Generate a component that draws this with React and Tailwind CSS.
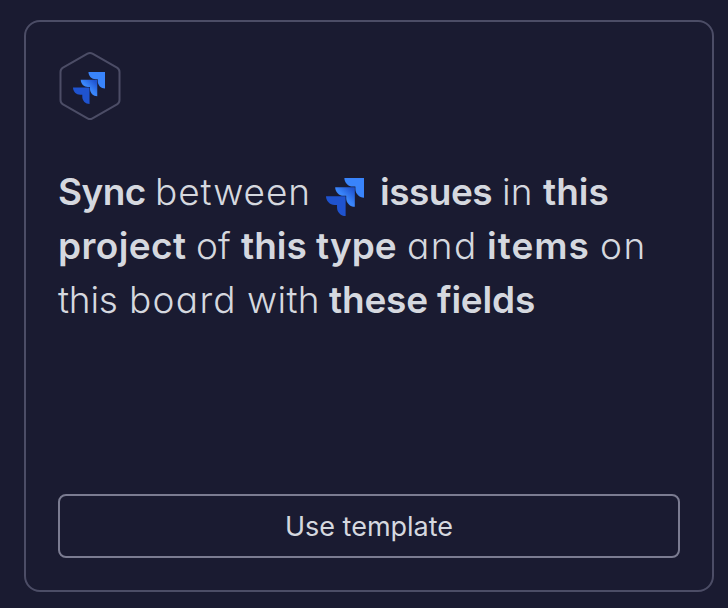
import { useId } from "react";

const ARROW = "M0 0H31V31C23.5 31 17.4 25 17.4 17.4V13.6H13.6C6 13.6 0 7.5 0 0Z";

function JiraMark({ className }) {
  const id = useId();
  return (
    <svg className={className} viewBox="0 0 60 60" fill="none">
      <defs>
        <linearGradient id={id + "m"} x1="30" y1="1" x2="16" y2="16" gradientUnits="userSpaceOnUse">
          <stop offset="0.15" stopColor="#1f53cf" />
          <stop offset="1" stopColor="#3a86fb" />
        </linearGradient>
      </defs>
      <path d={ARROW} transform="translate(29 0)" fill="#3984fb" />
      <path d={ARROW} transform="translate(14.5 14.5)" fill={`url(#${id}m)`} />
      <path d={ARROW} transform="translate(0 29)" fill="#1f53cf" />
    </svg>
  );
}

export default function App() {
  return (
    <main className="h-[608px] w-[728px] bg-[#1a1b31] pt-5 pl-6 text-[#d5d8df]">
      <section className="flex h-[572px] w-[690px] flex-col rounded-2xl border-2 border-[#4c4d66] px-8 pt-[29px] pb-8">
        <div className="grid h-[70px] w-16 place-items-center">
          <svg className="col-start-1 row-start-1 h-[70px] w-16" viewBox="0 0 64 70" fill="none">
            <path
              d="M29.5 2.7Q32 1.3 34.5 2.7L59 16.7Q61.5 18.1 61.5 21V49Q61.5 51.9 59 53.3L34.5 67.3Q32 68.7 29.5 67.3L5 53.3Q2.5 51.9 2.5 49V21Q2.5 18.1 5 16.7Z"
              stroke="#4c4d66"
              strokeWidth="2"
            />
          </svg>
          <JiraMark className="col-start-1 row-start-1 mt-[3px] -ml-0.5 size-8" />
        </div>
        <h2 className="mt-11 font-['Inter',sans-serif] text-[37px] leading-[54px] font-light whitespace-nowrap [font-feature-settings:'cv11']">
          <div className="flex h-[54px]">
            <b className="w-[97px] font-semibold tracking-[-0.6px]">Sync</b>
            <span className="w-[171px] tracking-[0.9px]">between</span>
            <JiraMark className="mt-[13px] mr-[16px] size-[38px]" />
            <b className="w-[122px] font-semibold tracking-[-0.5px]">issues</b>
            <span className="w-[41px]">in</span>
            <b className="font-semibold">this</b>
          </div>
          <div className="flex h-[54px]">
            <b className="w-[138px] font-semibold tracking-[0.4px]">project</b>
            <span className="w-[45px]">of</span>
            <b className="w-[166px] font-semibold">this type</b>
            <span className="w-[80px] tracking-[1.5px]">and</span>
            <b className="w-[113px] font-semibold tracking-[1px]">items</b>
            <span className="tracking-[1.5px]">on</span>
          </div>
          <div className="flex h-[54px]">
            <span className="w-[71px] tracking-[-0.2px]">this</span>
            <span className="w-[118px] tracking-[1.3px]">board</span>
            <span className="w-[82px] tracking-[0.3px]">with</span>
            <b className="font-semibold tracking-[-0.2px]">these fields</b>
          </div>
        </h2>
        <button className="mt-auto h-16 w-full rounded-lg border-2 border-[#7b7c91] pt-0.5 font-['Inter',sans-serif] text-[27px]">
          Use template
        </button>
      </section>
    </main>
  );
}
